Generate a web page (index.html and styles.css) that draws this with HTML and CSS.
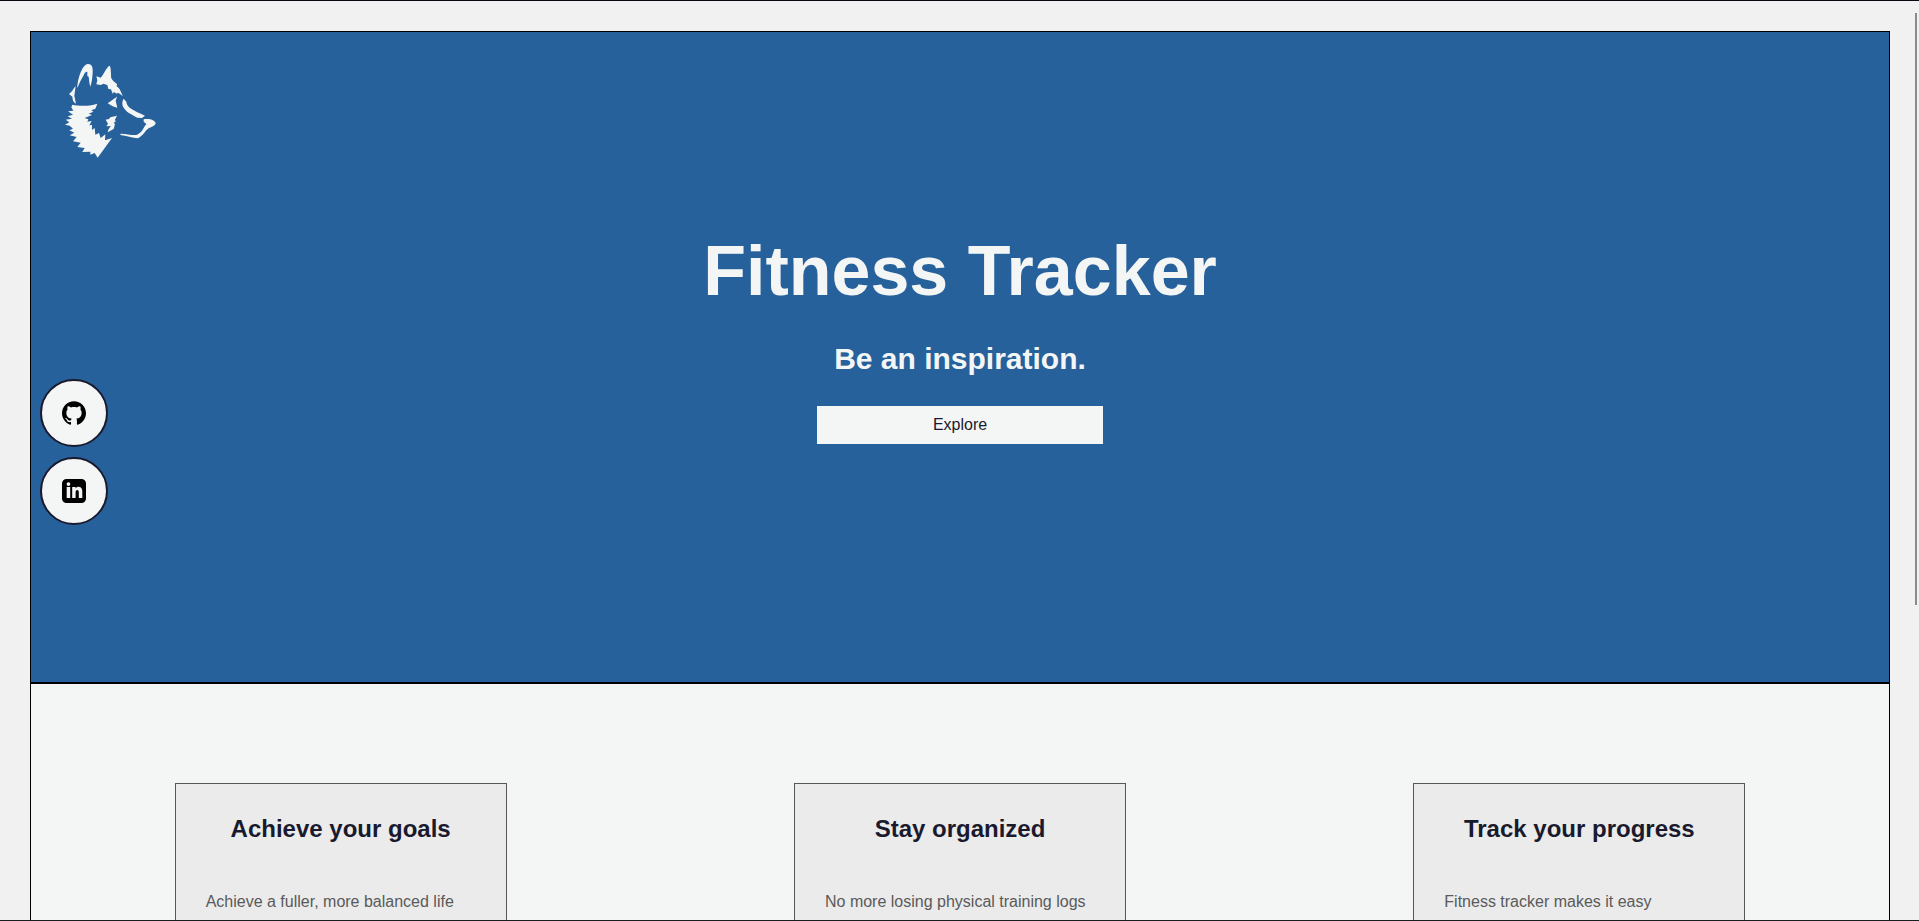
FILE: index.html
```html
<!DOCTYPE html>
<html lang="en">
<head>
<meta charset="utf-8">
<title>Fitness Tracker</title>
<link rel="stylesheet" href="styles.css">
</head>
<body>
<main class="page">
  <section class="hero">
    <svg class="logo" viewBox="165 165 330 330" aria-label="Wolf logo">
      <path d="M232 264C233 236 246 196 262 192C276 190 279 202 278 218C277 235 275 249 271 260C267 249 268 240 266 230L262 228L262 216C258 214 254 219 251 226C243 240 238 250 232 264Z"/>
      <path d="M227 258L223 287L228 311C220 307 218 301 217 290L207 282C216 276 219 267 227 258Z"/>
      <path d="M289 229L302 233C311 224 318 204 328 197C334 199 332 222 334 235C340 246 347 247 351 253L350 259C361 266 362 277 369 288L354 278L350 281L342 276L338 281L333 268L325 267L322 255L310 251L303 255L289 253L292 241Z"/>
      <path d="M323 310L351 290L347 302L352 323L338 319Z"/>
      <path d="M371 296L379 305C380 323 401 331 435 347L426 354L412 353C393 342 378 338 368 318C366 309 367 301 371 296Z"/>
      <path d="M351 347L344 361L348 363L341 369L345 372L341 387L323 397L325 389L332 378L319 379L324 371L317 359L327 357L331 352Z"/>
      <path d="M431 358C444 355 462 357 467 369C465 379 454 381 447 384C436 390 432 405 414 415C396 415 380 406 361 405L362 401C379 402 394 406 409 405C424 400 428 389 434 379L439 372L431 365Z"/>
      <path d="M217 314C239 319 266 319 292 311L286 326L274 331L280 335L266 341L276 345L254 354L265 358L262 365L275 363L268 376L276 375L276 390L284 384L286 404L297 399L302 414L316 403L315 421L336 414L293 473L284 459L271 464L271 455L247 456L254 444L232 441L242 428L219 424L230 411L209 406L223 398L208 391L219 386L209 377L195 374L208 367L197 359L216 356L203 349L219 344L204 334L220 332L214 322Z"/>
    </svg>
    <div class="intro">
      <h1 class="title">Fitness Tracker</h1>
      <h2 class="tagline">Be an inspiration.</h2>
      <button class="explore">Explore</button>
    </div>
  </section>
  <section class="features">
    <div class="cell"><article class="card">
      <h3 class="card-title">Achieve your goals</h3>
      <p class="card-text">Achieve a fuller, more balanced life</p>
    </article></div>
    <div class="cell"><article class="card">
      <h3 class="card-title">Stay organized</h3>
      <p class="card-text">No more losing physical training logs</p>
    </article></div>
    <div class="cell"><article class="card">
      <h3 class="card-title">Track your progress</h3>
      <p class="card-text">Fitness tracker makes it easy</p>
    </article></div>
  </section>
</main>
<nav class="social">
  <a class="social-link" aria-label="GitHub">
    <svg class="social-icon" viewBox="0 0 24 24"><path d="M12 .297c-6.63 0-12 5.373-12 12 0 5.303 3.438 9.8 8.205 11.385.6.113.82-.258.82-.577 0-.285-.01-1.04-.015-2.04-3.338.724-4.042-1.61-4.042-1.61C4.422 18.07 3.633 17.7 3.633 17.7c-1.087-.744.084-.729.084-.729 1.205.084 1.838 1.236 1.838 1.236 1.07 1.835 2.809 1.305 3.495.998.108-.776.417-1.305.76-1.605-2.665-.3-5.466-1.332-5.466-5.93 0-1.31.465-2.38 1.235-3.22-.135-.303-.54-1.523.105-3.176 0 0 1.005-.322 3.3 1.23.96-.267 1.98-.399 3-.405 1.02.006 2.04.138 3 .405 2.28-1.552 3.285-1.23 3.285-1.23.645 1.653.24 2.873.12 3.176.765.84 1.23 1.91 1.23 3.22 0 4.61-2.805 5.625-5.475 5.92.42.36.81 1.096.81 2.22 0 1.606-.015 2.896-.015 3.286 0 .315.21.69.825.57C20.565 22.092 24 17.592 24 12.297c0-6.627-5.373-12-12-12"/></svg>
  </a>
  <a class="social-link" aria-label="LinkedIn">
    <svg class="social-icon" viewBox="0 0 24 24"><path fill-rule="evenodd" d="M4.5 0H19.5A4.5 4.5 0 0 1 24 4.5V19.5A4.5 4.5 0 0 1 19.5 24H4.5A4.5 4.5 0 0 1 0 19.500V4.500A4.500 4.500 0 0 1 4.500 0ZM4.700 8V19H8.200V8ZM6.450 3.200A1.850 1.850 0 1 0 6.450 6.900A1.850 1.850 0 1 0 6.450 3.200ZM10.200 8V19H13.600V13.400C13.600 10.400 16.800 10.200 16.800 13.200V19H20.300V12.300C20.300 6.900 14.900 6.800 13.600 9.500V8Z"/></svg>
  </a>
</nav>
<div class="scroll-thumb"></div>
</body>
</html>
```
FILE: styles.css
```css
* { box-sizing: border-box; }
body {
  margin: 0;
  height: 921px;
  overflow: hidden;
  background: #f1f1f1;
  border-top: 1px solid #0b0710;
  border-bottom: 1px solid #1b1b20;
  font-family: Arial, "Liberation Sans", sans-serif;
  color: #1a1a2e;
}
.page {
  height: 889px;
  margin: 30px 29px 0 30px;
  overflow: hidden;
}
.hero {
  height: 652px;
  padding: 23px 24px;
  background: #26619c;
  border: 1px solid #000;
}
.logo { display: block; width: 110px; height: 110px; fill: #f4f6f5; }
.intro {
  display: flex;
  flex-direction: column;
  align-items: center;
  padding-top: 66px;
  color: #f4f6f5;
}
.title { margin: 0; font-size: 70px; line-height: 80px; }
.tagline { margin: 31px 0 0; font-size: 30px; line-height: 34px; }
.explore {
  width: 286px;
  height: 38px;
  margin-top: 30px;
  padding: 0;
  border: 0;
  background: #f4f6f5;
  color: #1a1a2e;
  font: 16px Arial, "Liberation Sans", sans-serif;
}
.features {
  display: grid;
  grid-template-columns: repeat(3, 1fr);
  height: 600px;
  padding-top: 99px;
  background: #f4f6f5;
  border: 1px solid #000;
}
.cell { display: flex; justify-content: center; align-items: flex-start; }
.card {
  width: 332px;
  height: 300px;
  padding: 31px 30px 30px;
  background: #ebebeb;
  border: 1px solid #555857;
}
.card-title { margin: 0; text-align: center; font-size: 24px; line-height: 28px; }
.card-text { margin: 49px 0 0; font-size: 16px; line-height: 20px; color: #5a5a5a; }
.social {
  position: fixed;
  left: 40px;
  top: 379px;
  display: flex;
  flex-direction: column;
  gap: 10px;
}
.social-link {
  display: flex;
  align-items: center;
  justify-content: center;
  width: 68px;
  height: 68px;
  border: 2px solid #1a1a2e;
  border-radius: 50%;
  background: #f4f6f5;
}
.social-icon { width: 24px; height: 24px; fill: #000; }
.scroll-thumb {
  position: fixed;
  right: 2px;
  top: 13px;
  width: 2px;
  height: 592px;
  background: #8b8b8b;
}
```
